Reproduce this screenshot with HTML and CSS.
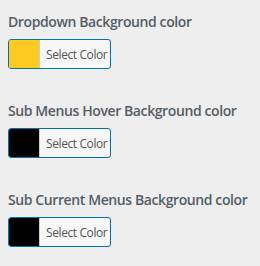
FILE: index.html
```html
<!DOCTYPE html>
<html lang="en">
<head>
    <meta charset="UTF-8">
    <meta name="viewport" content="width=device-width, initial-scale=1.0">
    <title>Menu Colors</title>
    <link rel="stylesheet" href="styles.css">
</head>
<body>

    <main class="controls">

        <!-- Color controls -->
        <div class="color-control">
            <span class="control-title">Dropdown Background color</span>
            <button class="color-button">
                <span class="color-swatch swatch-yellow"></span>
                <span class="color-label">Select Color</span>
            </button>
        </div>

        <div class="color-control">
            <span class="control-title">Sub Menus Hover Background color</span>
            <button class="color-button">
                <span class="color-swatch swatch-black"></span>
                <span class="color-label">Select Color</span>
            </button>
        </div>

        <div class="color-control">
            <span class="control-title">Sub Current Menus Background color</span>
            <button class="color-button">
                <span class="color-swatch swatch-black"></span>
                <span class="color-label">Select Color</span>
            </button>
        </div>

    </main>

</body>
</html>
```

FILE: styles.css
```css
body {
    margin: 0;
    padding: 0;
    background-color: #eeeeee;
    font-family: 'Open Sans', sans-serif;
    color: #555d66;
}

.controls {
    display: flex;
    flex-direction: column;
    gap: 31px;
    padding: 11px 8px 0 8px;
}

.color-control {
    display: flex;
    flex-direction: column;
    align-items: flex-start;
    gap: 7px;
}

.control-title {
    font-size: 14px;
    font-weight: 600;
    line-height: 21px;
    letter-spacing: -0.4px;
    white-space: nowrap;
}

.color-button {
    display: flex;
    width: 103px;
    height: 30px;
    padding: 0;
    border: 1px solid #0073aa;
    border-radius: 3px;
    background-color: #f7f7f7;
    overflow: hidden;
    cursor: pointer;
    box-sizing: border-box;
}

.color-swatch {
    width: 30px;
    height: 100%;
    border-right: 1px solid #cccccc;
}

.swatch-yellow {
    background-color: #fdca21;
}

.swatch-black {
    background-color: #000000;
}

.color-label {
    flex: 1;
    display: flex;
    align-items: center;
    padding-left: 6px;
    font-family: 'Open Sans', sans-serif;
    font-size: 12px;
    letter-spacing: -0.4px;
    color: #555555;
    white-space: nowrap;
}
```
